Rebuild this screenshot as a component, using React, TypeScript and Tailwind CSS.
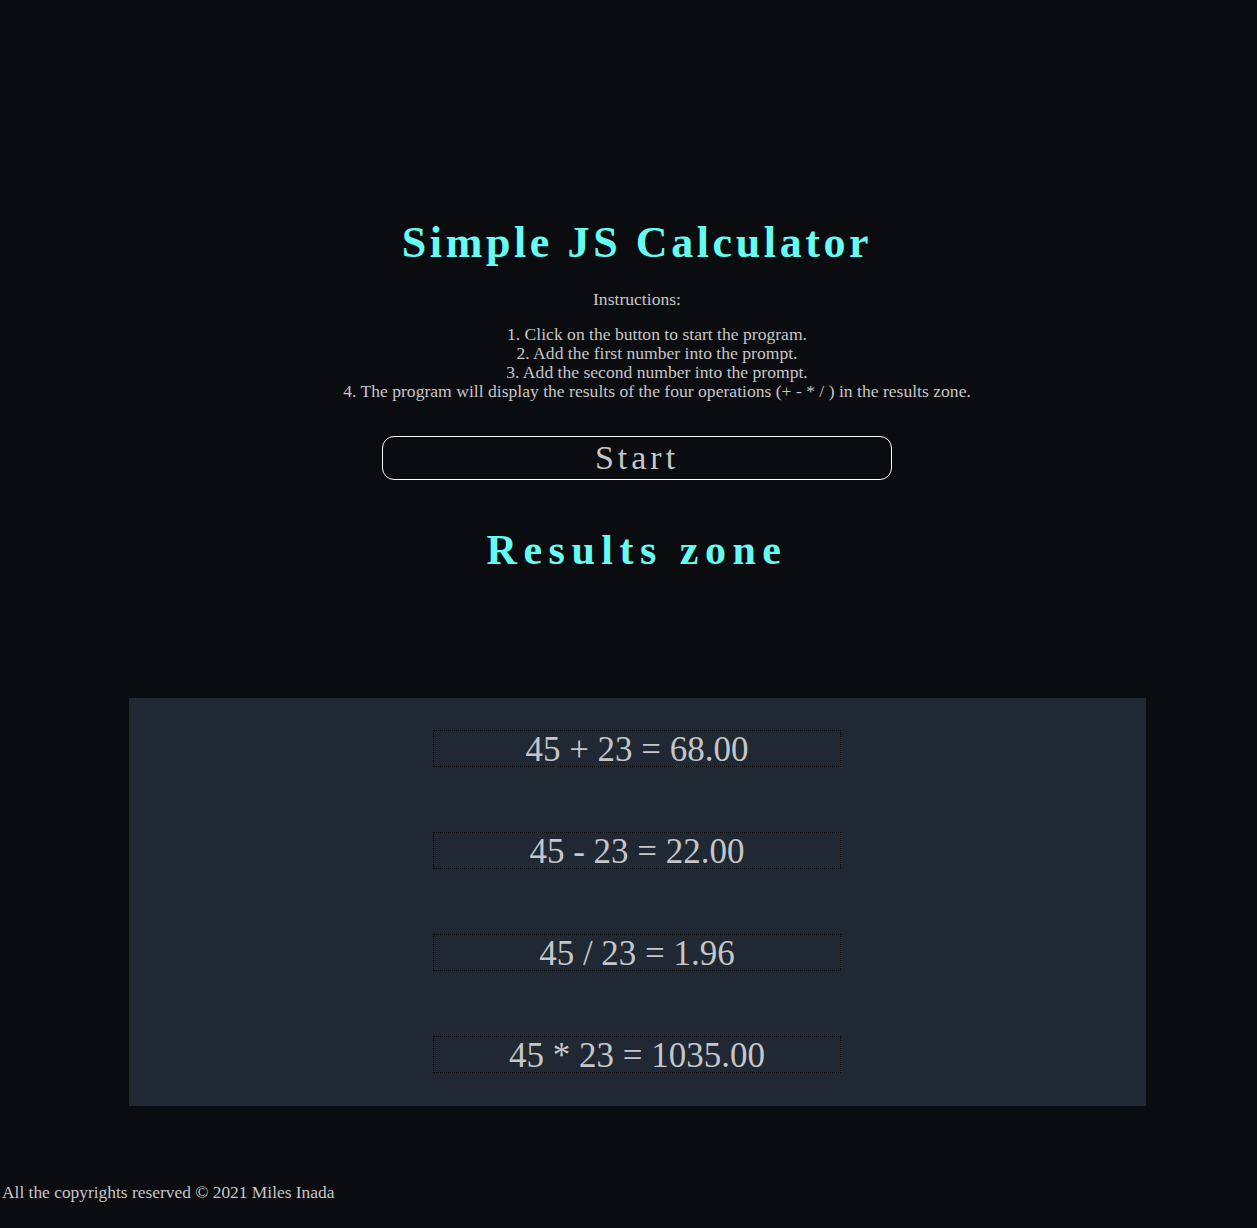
export default function App() {
  const results = ['45 + 23 = 68.00', '45 - 23 = 22.00', '45 / 23 = 1.96', '45 * 23 = 1035.00'];

  return (
    <div className="min-h-[1228px] bg-[#0b0c10] text-[#c5c6c7] font-['Liberation_Serif',serif]">
      <div className="flex flex-col items-center pl-[17px] pt-[220px]">
        <h1 className="text-[44px] leading-[46px] font-bold tracking-[3.6px] text-[#66fcf1]">Simple JS Calculator</h1>

        <p className="mt-[24px] text-[17.6px] leading-[19px]">Instructions:</p>
        <ol className="mt-[16px] pl-[40px] text-center text-[17.6px] leading-[19px]">
          <li>1. Click on the button to start the program.</li>
          <li>2. Add the first number into the prompt.</li>
          <li>3. Add the second number into the prompt.</li>
          <li>4. The program will display the results of the four operations (+ - * / ) in the results zone.</li>
        </ol>

        <button className="mt-[35px] h-[44px] w-[510px] rounded-[12px] border border-white bg-transparent text-[34px] leading-[42px] tracking-[4px] text-[#c5c6c7]">
          Start
        </button>

        <h2 className="mt-[47px] text-[42px] leading-[46px] font-bold tracking-[6.5px] text-[#66fcf1]">Results zone</h2>

        <div className="mt-[125px] flex w-[1017px] flex-col items-center gap-[65px] bg-[#1f2833] pt-[32px] pb-[33px]">
          {results.map((r) => (
            <div key={r} className="h-[37px] w-[408px] border border-dotted border-black text-center text-[35px] leading-[37px]">
              {r}
            </div>
          ))}
        </div>
      </div>

      <footer className="mt-[77px] pl-[2px] text-[17.4px] leading-[19px]">All the copyrights reserved © 2021 Miles Inada</footer>
    </div>
  );
}
